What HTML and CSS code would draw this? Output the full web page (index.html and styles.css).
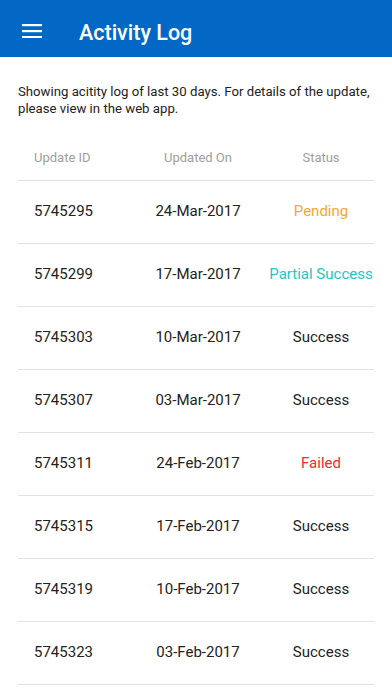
FILE: index.html
```html
<!DOCTYPE html>
<html>
<head>
<meta charset="utf-8">
<link rel="stylesheet" href="styles.css">
</head>
<body>
<header class="appbar">
  <svg class="menu" width="20" height="14" viewBox="0 0 20 14"><rect x="0" y="0" width="20" height="2.2" fill="#fff"/><rect x="0" y="6" width="20" height="2.2" fill="#fff"/><rect x="0" y="12" width="20" height="2.2" fill="#fff"/></svg>
  <h1 class="title">Activity Log</h1>
</header>
<main class="content">
  <p class="desc">Showing acitity log of last 30 days. For details of the update, please view in the web app.</p>
  <div class="table">
    <div class="row head">
      <div class="c1">Update ID</div><div class="c2">Updated On</div><div class="c3">Status</div>
    </div>
    <div class="row"><div class="c1">5745295</div><div class="c2">24-Mar-2017</div><div class="c3 pending">Pending</div></div>
    <div class="row"><div class="c1">5745299</div><div class="c2">17-Mar-2017</div><div class="c3 partial">Partial Success</div></div>
    <div class="row"><div class="c1">5745303</div><div class="c2">10-Mar-2017</div><div class="c3">Success</div></div>
    <div class="row"><div class="c1">5745307</div><div class="c2">03-Mar-2017</div><div class="c3">Success</div></div>
    <div class="row"><div class="c1">5745311</div><div class="c2">24-Feb-2017</div><div class="c3 failed">Failed</div></div>
    <div class="row"><div class="c1">5745315</div><div class="c2">17-Feb-2017</div><div class="c3">Success</div></div>
    <div class="row"><div class="c1">5745319</div><div class="c2">10-Feb-2017</div><div class="c3">Success</div></div>
    <div class="row"><div class="c1">5745323</div><div class="c2">03-Feb-2017</div><div class="c3">Success</div></div>
  </div>
</main>
</body>
</html>
```
FILE: styles.css
```css
html, body {
  margin: 0;
  padding: 0;
  background: #fff;
  font-family: Roboto, "Liberation Sans", sans-serif;
  color: #222;
}
.appbar {
  height: 57px;
  box-sizing: border-box;
  padding: 8px 0 0 22px;
  background: #0368c5;
  display: flex;
  align-items: center;
}
.menu {
  display: block;
  margin-top: -4px;
}
.title {
  margin: 0 0 0 37px;
  font-size: 21.5px;
  font-weight: 500;
  color: #fff;
  line-height: 26px;
}
.content {
  padding: 27px 18px 0 18px;
}
.desc {
  margin: 0;
  font-size: 13.2px;
  line-height: 16.5px;
  color: #222;
}
.table {
  margin-top: 18px;
}
.row {
  display: grid;
  grid-template-columns: 110px 140px 106px;
  align-items: center;
  height: 63px;
  box-sizing: border-box;
  border-bottom: 1px solid #e2e2e2;
  font-size: 15px;
  padding-bottom: 3px;
}
.row.head {
  height: 46px;
  padding-bottom: 1px;
  font-size: 13px;
  color: #9e9e9e;
}
.c1 {
  padding-left: 16px;
}
.c2, .c3 {
  text-align: center;
  white-space: nowrap;
}
.pending { color: #f7a733; }
.partial { color: #22c6c6; }
.failed { color: #f62a2a; }
```
